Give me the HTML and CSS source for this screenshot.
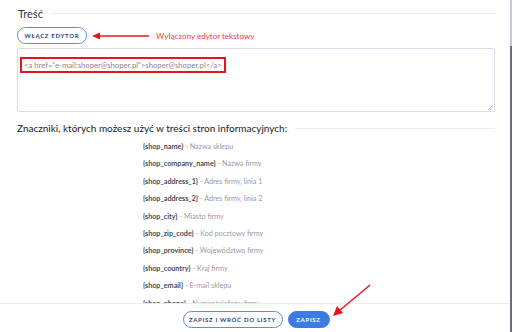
FILE: index.html
```html
<!DOCTYPE html>
<html lang="pl">
<head>
<meta charset="utf-8">
<link rel="stylesheet" href="styles.css">
</head>
<body>
<div class="page">
  <div class="section-head">
    <span class="section-title">Treść</span>
    <span class="rule"></span>
  </div>
  <div class="toolbar">
    <button class="btn-outline editor-btn">WŁĄCZ EDYTOR</button>
    <svg class="arrow-left" width="58" height="8" viewBox="0 0 58 8">
      <line x1="5" y1="4" x2="57" y2="4" stroke="#e8141c" stroke-width="1.4"/>
      <polygon points="0,4 8,0.5 8,7.5" fill="#e8141c"/>
    </svg>
    <span class="note">Wyłączony edytor tekstowy</span>
  </div>
  <div class="textarea">
    <span class="code">&lt;a href="e-mail:shoper@shoper.pl"&gt;shoper@shoper.pl&lt;/a&gt;</span>
    <svg class="grip" width="6" height="6" viewBox="0 0 6 6">
      <line x1="1" y1="6" x2="6" y2="1" stroke="#aaa" stroke-width="0.7"/>
      <line x1="3.5" y1="6" x2="6" y2="3.5" stroke="#aaa" stroke-width="0.7"/>
    </svg>
  </div>
  <div class="section-head tags-head">
    <span class="tags-title">Znaczniki, których możesz użyć w treści stron informacyjnych:</span>
    <span class="rule"></span>
  </div>
  <ul class="tags">
    <li><b>{shop_name}</b> - Nazwa sklepu</li>
    <li><b>{shop_company_name}</b> - Nazwa firmy</li>
    <li><b>{shop_address_1}</b> - Adres firmy, linia 1</li>
    <li><b>{shop_address_2}</b> - Adres firmy, linia 2</li>
    <li><b>{shop_city}</b> - Miasto firmy</li>
    <li><b>{shop_zip_code}</b> - Kod pocztowy firmy</li>
    <li><b>{shop_province}</b> - Województwo firmy</li>
    <li><b>{shop_country}</b> - Kraj firmy</li>
    <li><b>{shop_email}</b> - E-mail sklepu</li>
    <li><b>{shop_phone}</b> - Numer telefonu firmy</li>
  </ul>
</div>
<div class="footer">
  <button class="btn-outline">ZAPISZ I WRÓĆ DO LISTY</button>
  <button class="btn-solid">ZAPISZ</button>
</div>
<svg class="arrow-diag" width="40" height="34" viewBox="0 0 40 34">
  <line x1="38" y1="1" x2="7" y2="27" stroke="#e8141c" stroke-width="1.4"/>
  <polygon points="1,32 5,22 11,29" fill="#e8141c"/>
</svg>
<div class="scrollbar"><div class="thumb"></div></div>
</body>
</html>
```
FILE: styles.css
```css
html, body {
  margin: 0;
  padding: 0;
  background: #fff;
  font-family: Lato, "Noto Sans", sans-serif;
  color: #333;
}
.page {
  width: 478px;
  padding: 6px 0 0 17px;
}
.section-head {
  display: flex;
  align-items: center;
  gap: 8px;
  height: 14px;
}
.section-title {
  font-size: 11px;
  color: #333;
  padding-left: 1px;
}
.rule {
  flex: 1;
  height: 1px;
  background: #ececf0;
}
.toolbar {
  display: flex;
  align-items: center;
  margin-top: 7px;
  height: 17px;
}
.btn-outline {
  font-family: Lato, sans-serif;
  font-weight: 700;
  font-size: 6px;
  letter-spacing: 0.7px;
  color: #2d4485;
  background: #fff;
  border: 1px solid #5b8de3;
  border-radius: 9px;
  height: 17px;
  padding: 0 11px;
  cursor: pointer;
}
.editor-btn {
  width: 70px;
  padding: 0;
}
.arrow-left {
  margin-left: 5px;
}
.note {
  margin-left: 6px;
  font-size: 8px;
  color: #ef3b44;
}
.textarea {
  position: relative;
  margin-top: 4px;
  border: 1px solid #dcdce8;
  border-radius: 2px;
  padding: 3px 2px;
  box-sizing: content-box;
  height: 56px;
}
.code {
  display: inline-block;
  border: 2px solid #e8141c;
  padding: 1px 2px;
  font-size: 7.7px;
  color: #888;
  line-height: 10px;
}
.grip {
  position: absolute;
  right: 1px;
  bottom: 1px;
}
.tags-head {
  margin-top: 9px;
}
.tags-title {
  font-size: 10px;
  color: #222;
}
.tags {
  list-style: none;
  margin: 3px 0 0 0;
  padding: 0 0 0 126px;
}
.tags li {
  height: 17.4px;
  line-height: 17.4px;
  font-size: 7.2px;
  color: #9a9aa6;
}
.tags b {
  color: #4a4a55;
  font-weight: 700;
}
.footer {
  position: fixed;
  left: 0;
  right: 0;
  bottom: 0;
  height: 29px;
  background: #fff;
  border-top: 1px solid #ebebef;
  display: flex;
  justify-content: center;
  align-items: center;
  gap: 5px;
  padding-top: 3px;
  box-sizing: border-box;
}
.footer .btn-outline {
  width: 100px;
  padding: 0;
}
.btn-solid {
  font-family: Lato, sans-serif;
  font-weight: 700;
  font-size: 6px;
  letter-spacing: 0.7px;
  color: #fff;
  background: #3a7ce2;
  border: 1px solid #3a7ce2;
  border-radius: 9px;
  height: 17px;
  width: 42px;
  padding: 0;
}
.arrow-diag {
  position: fixed;
  left: 332px;
  top: 284px;
}
.scrollbar {
  position: fixed;
  right: 0;
  top: 0;
  bottom: 0;
  width: 2px;
  background: #c9c9d2;
}
.thumb {
  margin-top: 46px;
  height: 286px;
  background: #6d6b7c;
}
```
